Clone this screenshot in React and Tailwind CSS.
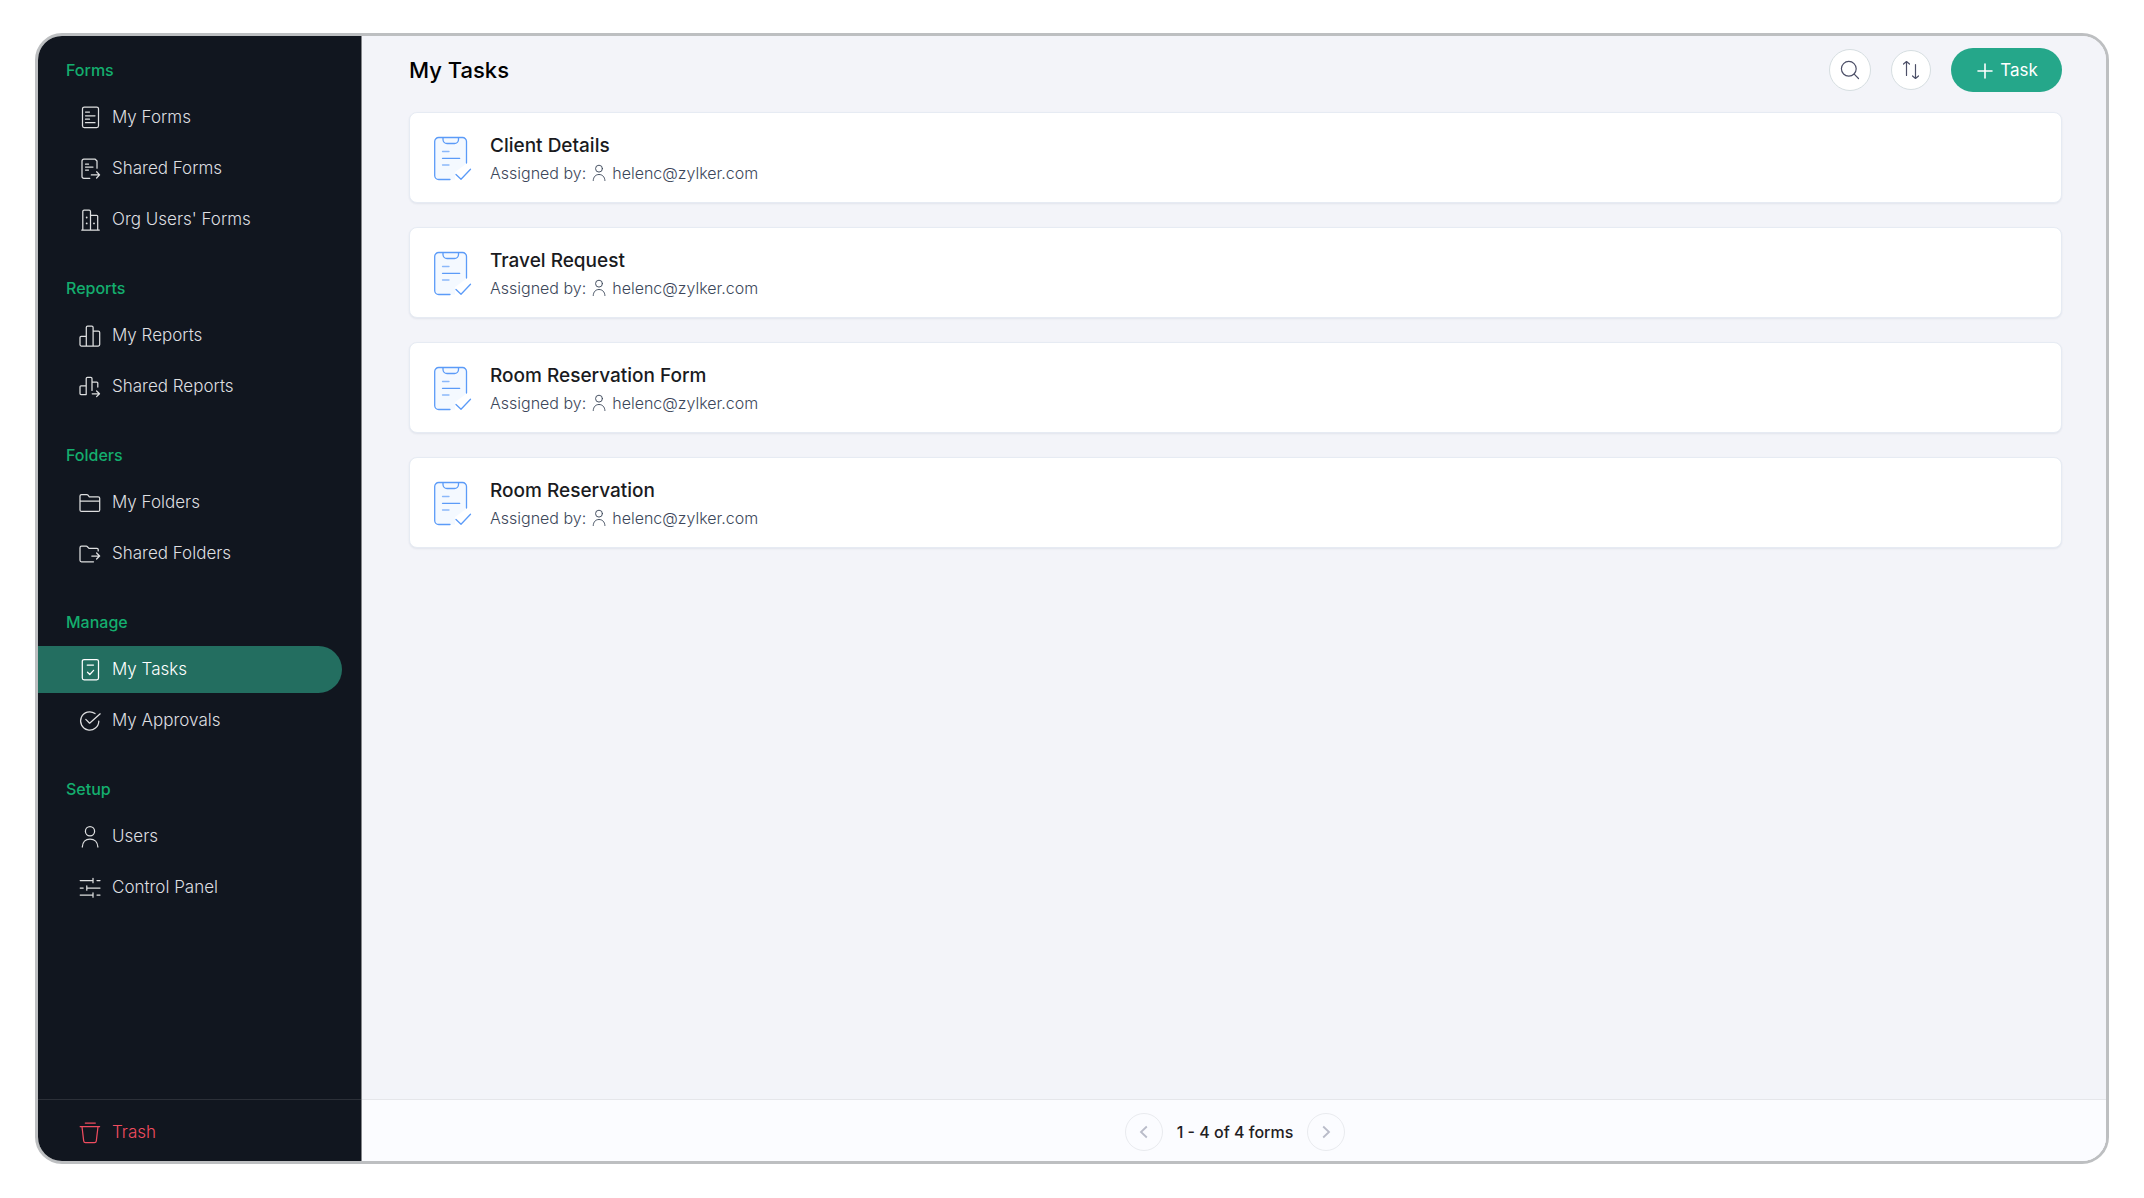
import { useState } from "react";

function Icon({ children, className = "size-6" }) {
  return (
    <svg
      viewBox="0 0 24 24"
      fill="none"
      stroke="currentColor"
      strokeWidth="1.25"
      strokeLinecap="round"
      strokeLinejoin="round"
      aria-hidden="true"
      className={`${className} shrink-0`}
    >
      {children}
    </svg>
  );
}

const icons = {
  form: (
    <>
      <rect x="4.5" y="1" width="16" height="20.5" rx="1.8" />
      <path d="M7.5 6h4M7.5 9.8h9.5M7.5 13.2h4M7.5 16.7h9.5" />
    </>
  ),
  sharedForm: (
    <>
      <path d="M19 11.2V4L17.2 2.2H5.8A1.8 1.8 0 0 0 4 4v15.5a1.8 1.8 0 0 0 1.8 1.8h6" />
      <path d="M7.5 7.2h3M7.5 10h7.5M7.5 13h3" />
      <path d="M13.3 17.9h8.2M18.6 14.8l3 3.1-3 3.1" />
    </>
  ),
  org: (
    <>
      <path d="M3.7 22h17.6M4.8 22V3.6c0-.8.5-1.4 1.3-1.4h5c.8 0 1.4.6 1.4 1.4V22M12.5 7.3h6.2c.6 0 1 .4 1 1V22" />
      <path strokeWidth="1.8" d="M8.7 9.5v.1M8.7 15.3v.1M16 15.3v.1" />
    </>
  ),
  report: (
    <path d="M8.3 22H3.4c-.8 0-1.4-.5-1.4-1.2v-7.2c0-.7.5-1.2 1.2-1.2h5.1M8.3 22V3.4c0-.8.5-1.4 1.3-1.4h4.2c.8 0 1.3.6 1.3 1.4V22zM15.1 7.2h5.2c.8 0 1.4.6 1.4 1.4v12c0 .8-.6 1.4-1.4 1.4h-5.2" />
  ),
  sharedReport: (
    <>
      <path d="M8.2 19.6H3c-.6 0-1-.4-1-1v-6.8c0-.6.4-1 1-1h5.2M8.2 19.6V3.6c0-.7.5-1.2 1.2-1.2h3.4c.7 0 1.2.5 1.2 1.2v11.8M14 7h4.8c.6 0 1 .4 1 1v4" />
      <path d="M14.2 18.8h7.2M18.6 16l2.9 2.8-2.9 2.8" />
    </>
  ),
  folder: (
    <path d="M2 10V5c0-.9.6-1.5 1.5-1.5h5.3c.5 0 .9.2 1.2.6l1.3 1.7h8.9c.9 0 1.5.6 1.5 1.5V10M2 10v8.9c0 .9.6 1.5 1.5 1.5h16.7c.9 0 1.5-.6 1.5-1.5V10z" />
  ),
  sharedFolder: (
    <>
      <path d="M15.5 19.8h-12c-.9 0-1.5-.6-1.5-1.5V5.7c0-.9.6-1.5 1.5-1.5h4.8c.4 0 .8.2 1.1.5L11 6.4h8c.7 0 1.2.5 1.2 1.2v1.3" />
      <path d="M13.8 14h7.9M18.6 11l3 3-3 3" />
    </>
  ),
  task: (
    <>
      <rect x="4.3" y="1.5" width="16.2" height="20.3" rx="1.8" />
      <path d="M9.2 7h6.3M9.5 14.2l2.3 2.3 3.8-4.2" />
    </>
  ),
  approval: (
    <>
      <path d="M17 4.6A9.1 9.1 0 1 0 20.8 12" />
      <path d="M7.8 10.4l3.8 3.8 10.6-9.4" />
    </>
  ),
  user: (
    <>
      <circle cx="12" cy="6.2" r="4.6" />
      <path d="M4.3 22c.2-4.8 3.2-8 7.7-8s7.7 3.2 7.9 8" />
    </>
  ),
  controls: (
    <>
      <path d="M2.2 4.5h12.6M19 4.5h3M15 2.3v4.4" />
      <path d="M2.2 12h3M9 12h13M8.8 9.8v4.4" />
      <path d="M2.2 19h12.6M19 19h3M15 16.8v4.4" />
    </>
  ),
  trash: (
    <path d="M7.3 2h10M2.2 5.7h19.4M4 5.7l1.7 14.3c.1 1 .8 1.7 1.8 1.7h9c1 0 1.7-.7 1.8-1.7L20 5.7" />
  ),
};

const sections = [
  {
    title: "Forms",
    items: [
      { label: "My Forms", icon: "form" },
      { label: "Shared Forms", icon: "sharedForm" },
      { label: "Org Users' Forms", icon: "org" },
    ],
  },
  {
    title: "Reports",
    items: [
      { label: "My Reports", icon: "report" },
      { label: "Shared Reports", icon: "sharedReport" },
    ],
  },
  {
    title: "Folders",
    items: [
      { label: "My Folders", icon: "folder" },
      { label: "Shared Folders", icon: "sharedFolder" },
    ],
  },
  {
    title: "Manage",
    items: [
      { label: "My Tasks", icon: "task" },
      { label: "My Approvals", icon: "approval" },
    ],
  },
  {
    title: "Setup",
    items: [
      { label: "Users", icon: "user" },
      { label: "Control Panel", icon: "controls" },
    ],
  },
];

const tasks = [
  { name: "Client Details", assignedBy: "helenc@zylker.com" },
  { name: "Travel Request", assignedBy: "helenc@zylker.com" },
  { name: "Room Reservation Form", assignedBy: "helenc@zylker.com" },
  { name: "Room Reservation", assignedBy: "helenc@zylker.com" },
];

function Sidebar({ active, onSelect }) {
  return (
    <aside className="w-[324px] shrink-0 flex flex-col bg-[#11161f] border-r border-[#85878b]">
      <nav className="flex-1 flex flex-col gap-[33px] pt-[22px]">
        {sections.map((section) => (
          <div key={section.title}>
            <h2 className="pl-7 mb-3 text-base leading-6 font-medium text-[#14ae6e]">
              {section.title}
            </h2>
            <ul className="flex flex-col gap-1">
              {section.items.map((item) => (
                <li key={item.label}>
                  <a
                    href="#"
                    onClick={() => onSelect(item.label)}
                    className={`h-[47px] mr-[19px] pl-10 flex items-center gap-[10px] rounded-r-full text-[17px] font-light ${
                      active === item.label
                        ? "bg-[#236e60] text-white"
                        : "text-[#dedfe0]"
                    }`}
                  >
                    <Icon>{icons[item.icon]}</Icon>
                    {item.label}
                  </a>
                </li>
              ))}
            </ul>
          </div>
        ))}
      </nav>

      <div className="h-[62px] border-t border-[#2c3038]">
        <a
          href="#"
          className="h-full pl-10 pt-1 flex items-center gap-[10px] text-[17px] font-light text-[#f04c5f]"
        >
          <Icon>{icons.trash}</Icon>
          Trash
        </a>
      </div>
    </aside>
  );
}

function ClipboardIcon() {
  return (
    <svg
      viewBox="0 0 40 46"
      fill="none"
      stroke="#5b9bf8"
      strokeWidth="1.3"
      strokeLinecap="round"
      strokeLinejoin="round"
      aria-hidden="true"
      className="w-10 h-[46px] shrink-0"
    >
      <path
        d="M5 1.5h23a4 4 0 0 1 4 4V28l-11 8v7.5H5a4 4 0 0 1-4-4v-34a4 4 0 0 1 4-4z"
        fill="#f4f9ff"
        stroke="none"
      />
      <path d="M32.500 27V5.500a4 4 0 0 0-4-4H4.700a4 4 0 0 0-4 4v34a4 4 0 0 0 4 4H16" />
      <path d="M9 1.700v1.800a4 4 0 0 0 4 4h7.500a4 4 0 0 0 4-4V1.700" />
      <path d="M8.500 15.500H15M8.500 29H15" stroke="#8ab8fa" />
      <path d="M8.500 22.300h17.200" />
      <path d="M22 38.500l5 4.700 9.500-9.900" />
    </svg>
  );
}

function TaskCard({ task }) {
  return (
    <li className="h-[91px] pl-6 pt-[2px] flex items-center gap-4 bg-white border border-[#e6ebf3] rounded-lg shadow-[0_1px_2px_rgba(30,50,90,0.08)]">
      <ClipboardIcon />
      <div className="pt-[3px]">
        <h3 className="text-[19px] leading-[26px] font-medium text-[#1a1b1e]">
          {task.name}
        </h3>
        <p className="flex items-center text-base leading-7 font-light text-[#3c475a]">
          Assigned by:
          <Icon className="size-[18px] mx-1">{icons.user}</Icon>
          {task.assignedBy}
        </p>
      </div>
    </li>
  );
}

function Pagination({ count }) {
  const buttonClass =
    "size-[38px] flex items-center justify-center rounded-full border border-[#e9ebef] text-[#b9bcc9]";

  return (
    <footer className="h-[62px] pt-[2px] pl-[2px] flex items-center justify-center gap-[14px] bg-[#fbfcff] border-t border-[#e5e6ea]">
      <button aria-label="Previous page" className={buttonClass}>
        <svg viewBox="0 0 16 16" fill="none" stroke="currentColor" strokeWidth="1.8" className="size-4">
          <path d="M10.8 2.5L5 8l5.8 5.5" />
        </svg>
      </button>
      <span className="text-base font-medium text-[#1f2023]">
        1 - {count} of {count} forms
      </span>
      <button aria-label="Next page" className={buttonClass}>
        <svg viewBox="0 0 16 16" fill="none" stroke="currentColor" strokeWidth="1.8" className="size-4">
          <path d="M5.2 2.5L11 8l-5.8 5.5" />
        </svg>
      </button>
    </footer>
  );
}

export default function App() {
  const [active, setActive] = useState("My Tasks");

  return (
    <div className="min-h-screen flex px-[35px] pt-[33px] pb-[34px] bg-white font-['Inter',sans-serif]">
      <div className="flex-1 flex overflow-hidden rounded-[27px] border-3 border-[#bdbfc1]">
        <Sidebar active={active} onSelect={setActive} />

        <div className="flex-1 flex flex-col bg-[#f3f4f9]">
          <main className="flex-1 pl-[47px] pr-11 pt-3">
            <header className="h-11 mb-5 flex items-center justify-between">
              <h1 className="text-[22px] font-medium text-black">My Tasks</h1>
              <div className="flex items-center gap-5">
                <button
                  aria-label="Search"
                  className="size-[42px] flex items-center justify-center bg-white border border-[#d6dee1] rounded-full text-[#4d5068]"
                >
                  <svg viewBox="0 0 20 20" fill="none" stroke="currentColor" strokeWidth="1.2" strokeLinecap="round" className="size-5">
                    <circle cx="8.8" cy="8.8" r="7.4" />
                    <path d="M14.2 14.2l4.3 4.3" />
                  </svg>
                </button>
                <button
                  aria-label="Sort"
                  className="size-10 flex items-center justify-center bg-white border border-[#d6dee1] rounded-full text-[#4d5068]"
                >
                  <svg viewBox="0 0 20 20" fill="none" stroke="currentColor" strokeWidth="1.2" strokeLinecap="round" strokeLinejoin="round" className="size-5">
                    <path d="M5.5 15.500V1.500M2.500 4l3-2.500 3 2.500M14.500 4.500V18.500M11.500 16l3 2.500 3-2.500" />
                  </svg>
                </button>
                <button className="h-11 w-[111px] pt-[2px] pl-[2px] flex items-center justify-center gap-[7px] bg-[#25a78a] rounded-full text-[17px] text-white">
                  <svg viewBox="0 0 16 16" stroke="currentColor" strokeWidth="1.6" strokeLinecap="round" className="size-4">
                    <path d="M8 1v14M1 8h14" />
                  </svg>
                  Task
                </button>
              </div>
            </header>

            <ul className="flex flex-col gap-6">
              {tasks.map((task) => (
                <TaskCard key={task.name} task={task} />
              ))}
            </ul>
          </main>

          <Pagination count={tasks.length} />
        </div>
      </div>
    </div>
  );
}
